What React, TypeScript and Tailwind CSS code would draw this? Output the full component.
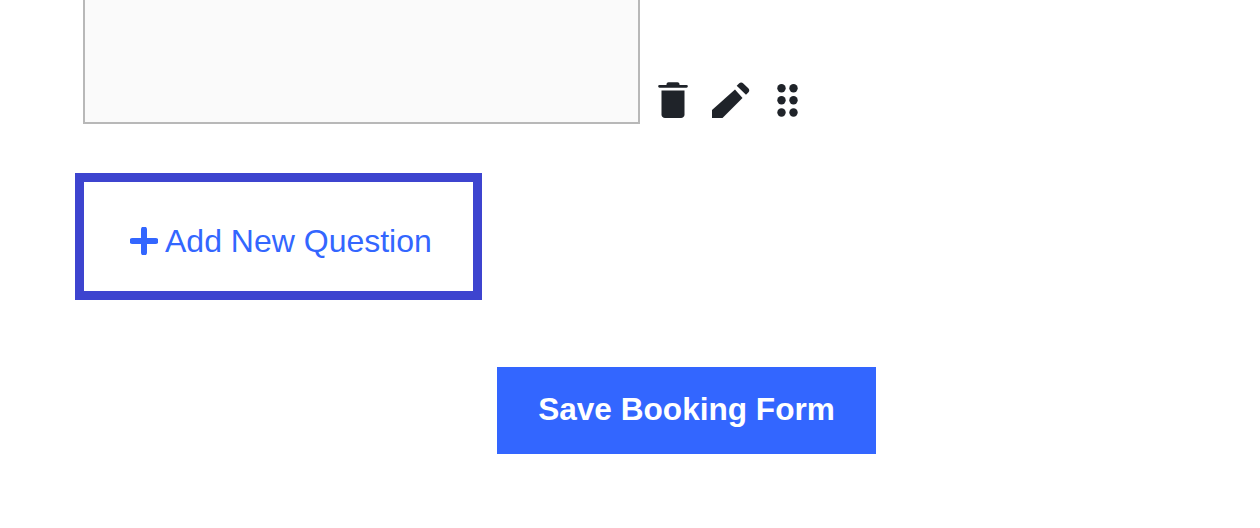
import React from 'react';

const TrashIcon = () => (
  <svg width="30" height="36" viewBox="0 0 30 36" fill="#1f2329" className="block">
    {/* lid */}
    <path d="M8.500 2.200C8.500 1 9.500 .2 10.500 .2h9c1 0 2 .8 2 2V3h7a1.300 1.300 0 0 1 0 2.700h-27a1.300 1.300 0 0 1 0-2.700h7z" />
    {/* can */}
    <path d="M3.500 8.500h23v24c0 2-1.600 3.500-3.500 3.500H7c-1.900 0-3.500-1.500-3.500-3.500z" />
  </svg>
);

const PencilIcon = () => (
  <svg width="38" height="36" viewBox="0 0 38 36" fill="#1f2329" className="block">
    <path d="M0 28 23 7.500 30.500 16 10 36.500H0z" />
    <path d="M27 1.500c1.300-1.300 3-1.300 4.300 0l5 4.700c1.300 1.300 1.300 3 0 4.300l-2.300 2.200-9.300-9z" />
  </svg>
);

const GripIcon = () => (
  <svg width="21" height="33" viewBox="0 0 21 33" fill="#1f2329" className="block">
    <circle cx="4.500" cy="4.300" r="4.200" />
    <circle cx="16.500" cy="4.300" r="4.200" />
    <circle cx="4.500" cy="16.300" r="4.200" />
    <circle cx="16.500" cy="16.300" r="4.200" />
    <circle cx="4.500" cy="28.500" r="4.200" />
    <circle cx="16.500" cy="28.500" r="4.200" />
  </svg>
);

const PlusIcon = () => (
  <svg width="28" height="28" viewBox="0 0 28 28" fill="#3366ff" className="block">
    <path d="M11 2.500a3 3 0 0 1 6 0V11h8.500a3 3 0 0 1 0 6H17v8.500a3 3 0 0 1-6 0V17H2.500a3 3 0 0 1 0-6H11z" />
  </svg>
);

const App: React.FC = () => {
  return (
    <div className="w-[1260px] h-[528px] bg-white overflow-hidden font-['Liberation_Sans',Arial,sans-serif]">
      {/* Question row */}
      <div className="flex items-end pl-[83px]">
        <div className="w-[557px] h-[124px] bg-[#fafafa] border-2 border-t-0 border-[#b8b8b8]" />
        <div className="flex items-end ml-[18px] mb-[6px]">
          <button aria-label="Delete question">
            <TrashIcon />
          </button>
          <button aria-label="Edit question" className="ml-[24px]">
            <PencilIcon />
          </button>
          <button aria-label="Move question" className="ml-[27px] mb-[1px]">
            <GripIcon />
          </button>
        </div>
      </div>

      {/* Add question */}
      <div className="pl-[75px] pt-[49px]">
        <button className="flex items-center w-[407px] h-[127px] pl-[46px] border-[9px] border-[#3d44cf] bg-white">
          <span className="mt-[9px]">
            <PlusIcon />
          </span>
          <span className="ml-[7px] mt-[9px] text-[32px] leading-none text-[#3366ff]">Add New Question</span>
        </button>
      </div>

      {/* Save */}
      <div className="pl-[497px] pt-[67px]">
        <button className="w-[379px] h-[87px] pb-[2px] bg-[#3366ff] text-white font-bold text-[31.6px]">
          Save Booking Form
        </button>
      </div>
    </div>
  );
};

export default App;
